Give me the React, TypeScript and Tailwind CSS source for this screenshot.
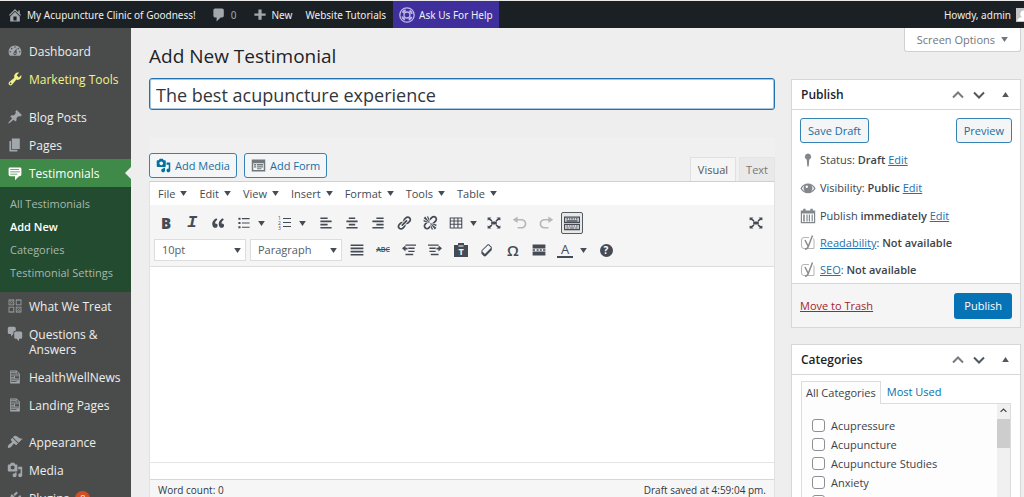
import type { ReactNode } from "react";

const P = {
  home: "M16 8.5l1.53 1.53-1.06 1.06L10 4.6l-6.47 6.49-1.06-1.06L10 2.5l4 4v-2h2v4zm-6-2.46l6 5.99V18H4v-5.97zM12 17v-5H8v5h4z",
  comment: "M5 2h9c1.1 0 2 .9 2 2v7c0 1.1-.9 2-2 2h-2l-5 5v-5H5c-1.1 0-2-.9-2-2V4c0-1.1.9-2 2-2z",
  plus: "M17 8v3h-5v5H8v-5H3V8h5V3h4v5h5z",
  dashboard:
    "M3.76 16h12.48c1.1-1.37 1.76-3.11 1.76-5 0-4.42-3.58-8-8-8s-8 3.58-8 8c0 1.89.66 3.63 1.76 5zM10 4c.55 0 1 .45 1 1s-.45 1-1 1-1-.45-1-1 .45-1 1-1zM6 6c.55 0 1 .45 1 1s-.45 1-1 1-1-.45-1-1 .45-1 1-1zm8 0c.55 0 1 .45 1 1s-.45 1-1 1-1-.45-1-1 .45-1 1-1zm-5.37 5.55L12 7v6c0 1.1-.9 2-2 2s-2-.9-2-2c0-.57.24-1.08.63-1.45zM4 10c.55 0 1 .45 1 1s-.45 1-1 1-1-.45-1-1 .45-1 1-1zm12 0c.55 0 1 .45 1 1s-.45 1-1 1-1-.45-1-1 .45-1 1-1zm-5 3c0-.55-.45-1-1-1s-1 .45-1 1 .45 1 1 1 1-.45 1-1z",
  tools:
    "M16.68 9.77c-1.34 1.34-3.3 1.67-4.95.99l-5.41 6.52c-.99.99-2.59.99-3.58 0s-.99-2.59 0-3.57l6.52-5.42c-.68-1.65-.35-3.61.99-4.95 1.28-1.28 3.12-1.62 4.72-1.06l-2.89 2.89 2.82 2.82 2.86-2.87c.53 1.58.18 3.39-1.08 4.65zM3.81 16.21c.4.39 1.04.39 1.43 0 .4-.4.4-1.04 0-1.43-.39-.4-1.03-.4-1.43 0-.39.39-.39 1.03 0 1.43z",
  pin: "M10.44 3.02l1.82-1.82 6.36 6.35-1.83 1.82c-1.05-.68-2.48-.57-3.41.36l-.75.75c-.92.93-1.04 2.35-.35 3.41l-1.83 1.82-2.41-2.41-2.8 2.79c-.42.42-3.38 2.71-3.8 2.29s1.86-3.39 2.28-3.81l2.79-2.79L4.1 9.36l1.83-1.82c1.05.69 2.48.57 3.4-.36l.75-.75c.93-.92 1.05-2.35.36-3.41z",
  page: "M6 15V2h10v13H6zm-1 1h8v2H3V5h2v11z",
  testimonial:
    "M4 3h12c.55 0 1.02.2 1.41.59S18 4.45 18 5v7c0 .55-.2 1.02-.59 1.41S16.55 14 16 14h-1l-5 5v-5H4c-.55 0-1.02-.2-1.41-.59S2 12.55 2 12V5c0-.55.2-1.02.59-1.41S3.45 3 4 3zm11 2H4v1h11V5zm1 3H4v1h12V8zm-3 3H4v1h9v-1z",
  chat: "M11 6h-.82C9.07 6 8 7.2 8 8.16V10l-3 3v-3H3c-1.1 0-2-.9-2-2V3c0-1.1.9-2 2-2h6c1.1 0 2 .9 2 2v3zm0 1h6c1.1 0 2 .9 2 2v5c0 1.1-.9 2-2 2h-2v3l-3-3h-1c-1.1 0-2-.9-2-2V9c0-1.1.9-2 2-2z",
  doc: "M12 2l4 4v12H4V2h8zM5 3v1h6V3H5zm7 3h3l-3-3v3zM5 5v1h6V5H5zm10 3V7H5v1h10zM5 9v1h4V9H5zm10 3V9h-5v3h5zM5 11v1h4v-1H5zm10 3v-1H5v1h10zm-3 2v-1H5v1h7z",
  appearance:
    "M14.48 11.06L7.41 3.99l1.5-1.5c.5-.56 2.3-.47 3.51.32 1.21.8 1.43 1.28 2.91 2.1 1.18.64 2.45 1.26 4.45.85zm-.71.71L6.7 4.7 4.93 6.47c-.39.39-.39 1.02 0 1.41l1.06 1.06c.39.39.39 1.03 0 1.42-.6.6-1.43 1.11-2.21 1.69-.35.26-.7.53-1.01.84C1.43 14.23.4 16.08 1.4 17.07c.99 1 2.84-.03 4.18-1.36.31-.31.58-.66.85-1.02.57-.78 1.08-1.61 1.69-2.21.39-.39 1.02-.39 1.41 0l1.06 1.06c.39.39 1.02.39 1.41 0z",
  media:
    "M13 11V4c0-.55-.45-1-1-1h-1.67L9 1H5L3.67 3H2c-.55 0-1 .45-1 1v7c0 .55.45 1 1 1h10c.55 0 1-.45 1-1zM7 4.5c1.38 0 2.5 1.12 2.5 2.5S8.38 9.5 7 9.5 4.5 8.38 4.5 7 5.62 4.5 7 4.5zM14 6h5v10.5c0 1.38-1.12 2.5-2.5 2.5S14 17.88 14 16.5s1.12-2.5 2.5-2.5c.17 0 .34.02.5.05V9h-3V6zm-4 8.05V13h2v3.5c0 1.38-1.12 2.5-2.5 2.5S7 17.88 7 16.5 8.12 14 9.5 14c.17 0 .34.02.5.05z",
  plugins:
    "M13.11 4.36L9.87 7.6 8 5.73l3.24-3.24c.35-.34 1.05-.2 1.56.32.52.51.66 1.21.31 1.55zm-8 1.77l.91-1.12 9.01 9.01-1.19.84c-.71.71-2.63 1.16-3.82 1.16H6.14L4.9 17.26c-.59.59-1.54.59-2.12 0-.59-.58-.59-1.53 0-2.12l1.24-1.24v-3.88c0-1.13.4-3.19 1.09-3.89zm7.26 3.97l3.24-3.24c.34-.35 1.04-.21 1.55.31.52.51.66 1.21.31 1.55l-3.24 3.25z",
  treat:
    "M2 2h7v7H2zM3 3v5h5V3zM11 2h7v7h-7zM12 3v5h5V3zM2 11h7v7H2zM3 12v5h5v-5zM11 11h7v7h-7zM12 12v5h5v-5zM4 4h1v1h1V4h1v1H6v1h1v1H6V6H5v1H4V6h1V5H4zM13 13h1v1h1v-1h1v1h-1v1h1v1h-1v-1h-1v1h-1v-1h1v-1h-1z",
  quote:
    "M9.49 13.22c0-.74-.2-1.38-.61-1.9-.62-.78-1.83-.88-2.53-.72-.29-1.65 1.11-3.75 2.92-4.65L7.88 4c-2.73 1.3-5.42 4.28-4.96 8.05C3.21 14.43 4.59 16 6.54 16c.85 0 1.56-.25 2.12-.75s.83-1.18.83-2.03zm8.05 0c0-.74-.2-1.38-.61-1.9-.63-.78-1.83-.88-2.53-.72-.29-1.65 1.11-3.75 2.92-4.65L15.93 4c-2.73 1.3-5.41 4.28-4.95 8.05.29 2.38 1.66 3.95 3.61 3.95.85 0 1.56-.25 2.12-.75s.83-1.18.83-2.03z",
  left: "M12 5V3H3v2h9zm5 4V7H3v2h14zm-5 4v-2H3v2h9zm5 4v-2H3v2h14z",
  center: "M14 5V3H6v2h8zm3 4V7H3v2h14zm-3 4v-2H6v2h8zm3 4v-2H3v2h14z",
  right: "M17 5V3H8v2h9zm0 4V7H3v2h14zm0 4v-2H8v2h9zm0 4v-2H3v2h14z",
  justify: "M2 3h16v2H2V3zm0 4h16v2H2V7zm0 4h16v2H2v-2zm0 4h16v2H2v-2z",
  link: "M17.74 2.76c1.68 1.69 1.68 4.41 0 6.1l-1.53 1.52c-1.12 1.12-2.7 1.47-4.14 1.09l2.62-2.61.76-.77.76-.76c.84-.84.84-2.2 0-3.04-.84-.85-2.2-.85-3.04 0l-.77.76-3.38 3.38c-.37-1.44-.02-3.02 1.1-4.14l1.52-1.53c1.69-1.68 4.42-1.68 6.1 0zM8.59 13.43l5.34-5.34c.42-.42.42-1.1 0-1.52-.44-.43-1.13-.39-1.53 0l-5.33 5.34c-.42.42-.42 1.1 0 1.52.44.43 1.13.39 1.52 0zm-.76 2.29l4.14-4.15c.38 1.44.03 3.02-1.09 4.14l-1.52 1.53c-1.69 1.68-4.41 1.68-6.1 0-1.68-1.68-1.68-4.42 0-6.1l1.53-1.52c1.12-1.12 2.7-1.47 4.14-1.1l-4.14 4.15c-.85.84-.85 2.2 0 3.05.84.84 2.2.84 3.04 0z",
  unlink:
    "M17.74 2.26c1.68 1.69 1.68 4.41 0 6.1l-1.53 1.52c-.32.33-.69.58-1.08.77L13 10l1.69-1.64.76-.77.76-.76c.84-.84.84-2.2 0-3.04-.84-.85-2.2-.85-3.04 0l-.77.76-.76.76L10 7l-.65-2.14c.19-.38.44-.75.77-1.07l1.52-1.53c1.69-1.68 4.42-1.68 6.1 0zM2 4l8 6-6-8zm4-2l4 8-2-8H6zM2 6l8 4-8-2V6zm7.36 7.69L10 13l.74 2.35-1.38 1.39c-1.69 1.68-4.41 1.68-6.1 0-1.68-1.68-1.68-4.42 0-6.1l1.39-1.38L7 10l-.69.64-1.52 1.53c-.85.84-.85 2.2 0 3.04.84.85 2.2.85 3.04 0zM18 16l-8-6 6 8zm-4 2l-4-8 2 8h2zm4-4l-8-4 8 2v2z",
  full: "M7 3H2v4l1.5-1.200L7 8l1-1-2.800-2.800zM13 3h5v4l-1.500-1.200L13 8l-1-1 2.800-2.800zM7 17H2v-4l1.500 1.200L7 12l1 1-2.800 2.800zM13 17h5v-4l-1.500 1.200L13 12l-1 1 2.800 2.800zM6.500 8h7v4h-7z",
  undo: "M12 5H7V2L1 6l6 4V7h5c2.200 0 4 1.800 4 4s-1.800 4-4 4H7v2h5c3.300 0 6-2.700 6-6s-2.700-6-6-6z",
  redo: "M8 5h5V2l6 4-6 4V7H8c-2.200 0-4 1.800-4 4s1.800 4 4 4h5v2H8c-3.300 0-6-2.700-6-6s2.700-6 6-6z",
  table: "M1 2h18v16H1zM2.500 3.500v3h4v-3zM8 3.500v3h4v-3zM13.500 3.500v3h4v-3zM2.500 8v3h4V8zM8 8v3h4V8zM13.500 8v3h4V8zM2.500 12.500v4h4v-4zM8 12.500v4h4v-4zM13.500 12.500v4h4v-4z",
  sink: "M0 2h20v8H0zM1.500 3.500v5h17v-5zM3 4h2v1.500H3zM6 4h2v1.500H6zM9 4h2v1.500H9zM12 4h2v1.500h-2zM15 4h2v1.500h-2zM3 6.500h14V8H3zM0 11h20v8H0zM1.500 12.500v5h17v-5zM3 13h2v1.500H3zM6 13h2v1.500H6zM9 13h2v1.500H9zM12 13h2v1.500h-2zM15 13h2v1.500h-2zM3 15.500h3V17H3zM7 15.500h6V17H7zM14 15.500h3V17h-3z",
  outdent: "M5 2h15v2H5zM9 6.500h9v2H9zM9 11h9v2H9zM5 15.500h11v2H5zM8 9.200H5V12L0 7.500 5 3.500v3.300h3z",
  indent: "M0 2h15v2H0zM2 6.500h9v2H2zM2 11h9v2H2zM4 15.500h11v2H4zM12 6.800h3V3.500l5 4-5 4.500V9.200h-3z",
  eraser:
    "M14.29 4.59l1.1 1.11c.41.4.61.94.61 1.47v2.12c0 .53-.2 1.07-.61 1.47l-6.63 6.63c-.4.41-.94.61-1.47.61s-1.07-.2-1.47-.61l-1.11-1.1-1.1-1.11c-.41-.4-.61-.94-.61-1.47v-2.12c0-.54.2-1.07.61-1.48l6.63-6.62c.4-.41.94-.61 1.47-.61s1.06.2 1.47.61zm-6.21 9.7l6.42-6.42c.39-.39.39-1.03 0-1.43L12.36 4.3c-.19-.19-.45-.29-.72-.29s-.52.1-.71.29l-6.42 6.42c-.39.4-.39 1.04 0 1.43l2.14 2.14c.38.38 1.04.38 1.43 0z",
  more: "M2 3h16v5H2zM2 9h3v2H2zM7 9h2.500v2H7zM11 9h2.500v2H11zM15 9h3v2h-3zM2 12h16v5H2z",
  ul: "M2 2.500h3v3H2zM7 3h11v1.500H7zM2 8.500h3v3H2zM7 9.200h11v1.500H7zM2 14.500h3v3H2zM7 15.200h11v1.500H7z",
  form: "M1 2h18v16H1zM3 7v9h14V7zM4 8h3v2H4zM8 8h8v2H8zM4 11h3v1.500H4zM8 11h8v1.500H8zM8 13.500h6V15H8z",
  status: "M10 2a4 4 0 0 1 1.500 7.700L11 17l-1 2-1-2-.500-7.300A4 4 0 0 1 10 2z",
  eye: "M.5 10.500C2.500 6.700 6 4.500 10 4.500s7.500 2.200 9.500 6c-2 3.800-5.500 6-9.500 6s-7.500-2.200-9.500-6zM2.400 10.500c1 1.800 2.300 3.100 4 3.900A5 5 0 0 1 6 6.700c-1.500.9-2.700 2.100-3.600 3.800zM17.600 10.500c-.9-1.700-2.100-2.900-3.600-3.800a5 5 0 0 1-.4 7.700c1.700-.8 3-2.100 4-3.900zM8.500 7a1.500 1.500 0 1 0 0 3 1.500 1.500 0 0 0 0-3z",
  calendar: "M4 1h3v2h6V1h3v2h3v16H1V3h3zM2.500 7v10.500h15V7zM4 8h2v9H4zM8 8h1.500v9H8zM11 8h1.500v9H11zM14.500 8h1.500v9h-1.500z",
};

function Ico({ name, className = "size-4" }: { name: keyof typeof P; className?: string }) {
  return (
    <svg viewBox="0 0 20 20" className={`shrink-0 fill-current ${className}`} fillRule="evenodd" aria-hidden="true">
      <path d={P[name]} />
    </svg>
  );
}

function Caret({ up = false, className = "" }: { up?: boolean; className?: string }) {
  return (
    <svg viewBox="0 0 8 6" className={`h-[5px] w-[7px] shrink-0 fill-current ${className}`} aria-hidden="true">
      <path d={up ? "M4 0l4 6H0z" : "M0 0h8L4 6z"} />
    </svg>
  );
}

function Chevron({ up = false, className = "h-2 w-3" }: { up?: boolean; className?: string }) {
  return (
    <svg viewBox="0 0 12 8" className={`fill-none stroke-current stroke-2 ${className}`} aria-hidden="true">
      <path d={up ? "M1 6.500l5-5 5 5" : "M1 1.500l5 5 5-5"} />
    </svg>
  );
}

function NavItem({ icon, label, tone = "text-[#eee]" }: { icon: keyof typeof P; label: ReactNode; tone?: string }) {
  return (
    <a href="#" className={`flex gap-1.5 px-[7px] pt-1.5 pb-1.5 text-[12px] ${tone}`}>
      <Ico name={icon} className={tone === "text-[#eee]" ? "size-4 text-[#a2a7ab]" : "size-4"} />
      <span className="pt-px leading-[15px] whitespace-nowrap">{label}</span>
    </a>
  );
}

function Tool({ label, children }: { label: string; children: ReactNode }) {
  return (
    <button type="button" aria-label={label} className="flex h-[22px] w-[26px] shrink-0 items-center justify-center">
      {children}
    </button>
  );
}

function SplitTool({ label, width = "w-[41px]", children }: { label: string; width?: string; children: ReactNode }) {
  return (
    <button type="button" aria-label={label} className={`flex h-[22px] shrink-0 items-center gap-[7px] pl-[6px] ${width}`}>
      {children}
      <Caret />
    </button>
  );
}

function BoxHeader({ title }: { title: string }) {
  return (
    <header className="flex h-[30px] items-center border-b border-[#d5d7d9] px-[9px] text-[#50575e]">
      <h2 className="grow text-[12px] leading-4 font-semibold text-[#1d2327]">{title}</h2>
      <div className="flex items-center gap-[9px]">
        <button type="button" aria-label={`Move ${title} up`}>
          <Chevron up className="h-2 w-3 text-[#787c82]" />
        </button>
        <button type="button" aria-label={`Move ${title} down`}>
          <Chevron />
        </button>
        <button type="button" aria-label={`Toggle ${title}`} className="ml-2 pr-0.5">
          <Caret up />
        </button>
      </div>
    </header>
  );
}

const outlineButton =
  "flex h-[25px] items-center rounded-[3px] border border-[#3582b5] bg-[#f3f5f6] text-[11px] leading-4 text-[#1a6e9f]";

function Seo() {
  return (
    <svg viewBox="0 0 16 16" className="size-4 shrink-0 fill-none stroke-[#8c8c8c]" aria-hidden="true">
      <path d="M9 2.500H4Q1.500 2.500 1.500 5v6Q1.500 13.500 4 13.500h10V5Q14 4 13.500 3.500" stroke="#b4b4b4" />
      <path d="M5 5l3 6M12.500.5L8.500 11Q7.500 14 5 14.200" strokeWidth="1.500" />
    </svg>
  );
}

function Sidebar() {
  return (
    <nav className="w-[131px] shrink-0 bg-[#4a4c4b] pt-[9px]">
      <NavItem icon="dashboard" label="Dashboard" />
      <NavItem icon="tools" label="Marketing Tools" tone="text-[#f2f285]" />
      <div className="h-2.5" />
      <NavItem icon="pin" label="Blog Posts" />
      <NavItem icon="page" label="Pages" />
      <div className="relative bg-[#3f8a48]">
        <NavItem icon="testimonial" label="Testimonials" tone="text-white" />
        <svg viewBox="0 0 6 12" className="absolute top-2 right-0 h-3 w-1.5 fill-[#eee]" aria-hidden="true">
          <path d="M6 0v12L0 6z" />
        </svg>
      </div>
      <ul className="bg-[#224b2f] pt-[5px] pb-2 text-[11px] leading-[23px] text-[#a9b8ae]">
        {["All Testimonials", "Add New", "Categories", "Testimonial Settings"].map((t) => (
          <li key={t}>
            <a href="#" className={t === "Add New" ? "block pl-2.5 font-semibold whitespace-nowrap text-white" : "block pl-2.5 whitespace-nowrap"}>
              {t}
            </a>
          </li>
        ))}
      </ul>
      <NavItem icon="treat" label="What We Treat" />
      <NavItem
        icon="chat"
        label={
          <>
            Questions &amp;
            <br />
            Answers
          </>
        }
      />
      <NavItem icon="doc" label="HealthWellNews" />
      <NavItem icon="doc" label="Landing Pages" />
      <div className="h-[9px]" />
      <NavItem icon="appearance" label="Appearance" />
      <NavItem icon="media" label="Media" />
      <NavItem
        icon="plugins"
        label={
          <span className="flex gap-1.5">
            Plugins
            <span className="size-[15px] rounded-full bg-[#d54e21] text-center text-[9px] leading-[15px] text-white">8</span>
          </span>
        }
      />
    </nav>
  );
}

function Editor() {
  return (
    <section className="mt-[27px] bg-[#f0f0f0]">
      <div className="flex items-end justify-between">
        <div className="flex gap-[7px] pt-4 pb-[3px]">
          <button type="button" className={`${outlineButton} gap-1 px-1.5`}>
            <Ico name="media" className="size-[15px] text-[#0071a1]" />
            Add Media
          </button>
          <button type="button" className={`${outlineButton} gap-1 px-1.5`}>
            <Ico name="form" className="size-[15px] text-[#72777c]" />
            Add Form
          </button>
        </div>
        <div className="flex gap-[3px] text-[11px] leading-[22px] text-[#555]">
          <button type="button" className="h-6 border border-b-0 border-[#e0e0e0] bg-[#f5f5f5] px-[7px]">
            Visual
          </button>
          <button type="button" className="h-6 border border-b-0 border-[#e4e4e4] bg-[#e9e9e9] px-1.5 text-[#777]">
            Text
          </button>
        </div>
      </div>
      <div className="border border-t-[#d0d0d0] border-[#e2e2e2] bg-white">
        <div className="flex h-[23px] items-center gap-3 pl-2 text-[11px] leading-4 text-[#444b54]">
          {["File", "Edit", "View", "Insert", "Format", "Tools", "Table"].map((m) => (
            <button key={m} type="button" className="flex items-center gap-[5px]">
              {m}
              <Caret />
            </button>
          ))}
        </div>
        <div className="border-b border-[#ddd] bg-[#f5f5f5] pt-[7px] pb-[5px] text-[#444b54]">
          <div className="flex h-[22px] items-center pr-[5px] pl-[3px]">
            <Tool label="Bold">
              <span className="text-[15px] leading-4 font-extrabold">B</span>
            </Tool>
            <Tool label="Italic">
              <span className="font-['Liberation_Mono',monospace] text-[17px] leading-4 font-bold italic">I</span>
            </Tool>
            <Tool label="Blockquote">
              <Ico name="quote" />
            </Tool>
            <SplitTool label="Bulleted list">
              <Ico name="ul" className="size-3.5" />
            </SplitTool>
            <SplitTool label="Numbered list">
              <svg viewBox="0 0 14 14" className="size-3.5 fill-current" aria-hidden="true">
                <path d="M5 2h8v1H5zM5 6h8v1H5zM5 10h8v1H5z" />
                <text x="0" y="4" fontSize="5">1</text>
                <text x="0" y="9" fontSize="5">2</text>
                <text x="0" y="14" fontSize="5">3</text>
              </svg>
            </SplitTool>
            <Tool label="Align left">
              <Ico name="left" />
            </Tool>
            <Tool label="Align center">
              <Ico name="center" />
            </Tool>
            <Tool label="Align right">
              <Ico name="right" />
            </Tool>
            <Tool label="Insert link">
              <Ico name="link" />
            </Tool>
            <Tool label="Remove link">
              <Ico name="unlink" />
            </Tool>
            <SplitTool label="Table" width="w-[38px]">
              <Ico name="table" className="size-3.5" />
            </SplitTool>
            <Tool label="Fullscreen">
              <Ico name="full" />
            </Tool>
            <Tool label="Undo">
              <Ico name="undo" className="size-4 text-[#b4b7bb]" />
            </Tool>
            <Tool label="Redo">
              <Ico name="redo" className="size-4 text-[#b4b7bb]" />
            </Tool>
            <button
              type="button"
              aria-label="Toolbar toggle"
              className="ml-0.5 flex size-[22px] items-center justify-center rounded-[2px] border border-[#555d66] bg-[#e8e8e8]"
            >
              <Ico name="sink" />
            </button>
            <div className="grow" />
            <Tool label="Distraction free">
              <Ico name="full" />
            </Tool>
          </div>
          <div className="mt-[5px] flex h-[22px] items-center pl-1">
            <div className="mr-0.5 flex gap-1">
              {["10pt", "Paragraph"].map((o) => (
                <div key={o} className="relative flex items-center">
                  <select
                    aria-label={o === "10pt" ? "Font size" : "Block format"}
                    className="h-[22px] w-[92px] appearance-none border border-[#ddd] bg-white pl-[7px] text-[11px] leading-4 text-[#555d66]"
                  >
                    <option>{o}</option>
                  </select>
                  <Caret className="pointer-events-none absolute right-[5px]" />
                </div>
              ))}
            </div>
            <Tool label="Justify">
              <Ico name="justify" />
            </Tool>
            <Tool label="Strikethrough">
              <span className="text-[7px] leading-4 font-semibold line-through">ABC</span>
            </Tool>
            <Tool label="Decrease indent">
              <Ico name="outdent" className="size-3.5" />
            </Tool>
            <Tool label="Increase indent">
              <Ico name="indent" className="size-3.5" />
            </Tool>
            <Tool label="Paste as text">
              <svg viewBox="0 0 14 14" className="size-3.5" aria-hidden="true">
                <path d="M0 2h4V0h6v2h4v12H0z" className="fill-current" />
                <path d="M4.500 3h5" stroke="#f5f5f5" />
                <text x="7" y="12" fontSize="9" fontWeight="bold" textAnchor="middle" fill="#f5f5f5">T</text>
              </svg>
            </Tool>
            <Tool label="Clear formatting">
              <Ico name="eraser" />
            </Tool>
            <Tool label="Special character">
              <span className="text-[15px] leading-4 font-semibold">Ω</span>
            </Tool>
            <Tool label="Read more">
              <Ico name="more" />
            </Tool>
            <SplitTool label="Text color">
              <span className="-ml-px w-4 border-b-2 border-current text-center text-[13px] leading-[13px] font-medium">A</span>
            </SplitTool>
            <Tool label="Help">
              <span className="size-[13px] rounded-full bg-[#444b54] text-center text-[10px] leading-[13px] font-bold text-white">?</span>
            </Tool>
          </div>
        </div>
        <div role="textbox" aria-label="Content" contentEditable suppressContentEditableWarning className="h-[195px] outline-none" />
        <div className="h-[17px] border-t border-[#e5e5e5]" />
        <div className="flex h-5 items-center justify-between border-t border-[#d5d7d9] bg-[#f6f6f6] px-2 text-[10px] leading-4 text-[#32373c]">
          <span>Word count: 0</span>
          <span>Draft saved at 4:59:04 pm.</span>
        </div>
      </div>
    </section>
  );
}

function PublishBox() {
  const link = "text-[#2271b1] underline";
  return (
    <section className="border border-[#d5d7d9] bg-white">
      <BoxHeader title="Publish" />
      <div className="px-2 pt-2 text-[11px] leading-4 text-[#444]">
        <div className="flex justify-between">
          <button type="button" className={`${outlineButton} px-[7px]`}>
            Save Draft
          </button>
          <button type="button" className={`${outlineButton} px-[7px]`}>
            Preview
          </button>
        </div>
        <div className="mt-[3px] text-[#3c434a]">
          <p className="flex h-7 items-center gap-1">
            <Ico name="status" className="size-4 text-[#82878c]" />
            <span>
              Status: <b className="font-semibold">Draft</b> <a href="#" className={link}>Edit</a>
            </span>
          </p>
          <p className="flex h-7 items-center gap-1">
            <Ico name="eye" className="size-4 text-[#82878c]" />
            <span>
              Visibility: <b className="font-semibold">Public</b> <a href="#" className={link}>Edit</a>
            </span>
          </p>
          <p className="flex h-7 items-center gap-1">
            <Ico name="calendar" className="size-4 text-[#82878c]" />
            <span>
              Publish <b className="font-semibold">immediately</b> <a href="#" className={link}>Edit</a>
            </span>
          </p>
          <p className="flex h-[26px] items-center gap-1">
            <Seo />
            <span>
              <a href="#" className={link}>Readability</a>: <b className="font-semibold">Not available</b>
            </span>
          </p>
          <p className="flex h-[27px] items-center gap-1">
            <Seo />
            <span>
              <a href="#" className={link}>SEO</a>: <b className="font-semibold">Not available</b>
            </span>
          </p>
        </div>
      </div>
      <footer className="flex h-11 items-center justify-between border-t border-[#d5d7d9] bg-[#f5f5f5] px-2 text-[11px] leading-4">
        <a href="#" className="text-[#a8232a] underline">
          Move to Trash
        </a>
        <button type="button" className="h-[26px] rounded-[3px] bg-[#0673b6] px-2.5 text-white">
          Publish
        </button>
      </footer>
    </section>
  );
}

function CategoriesBox() {
  return (
    <section className="border border-[#d5d7d9] bg-white">
      <BoxHeader title="Categories" />
      <div className="px-[9px] pt-1.5 text-[11px] leading-4 text-[#3c434a]">
        <div className="flex">
          <button type="button" className="z-10 -mb-px border border-b-0 border-[#dcdcde] bg-[#fdfdfd] px-1 py-[3px]">
            All Categories
          </button>
          <button type="button" className="px-1.5 text-[#0073aa]">
            Most Used
          </button>
        </div>
        <div className="flex h-[170px] justify-between border border-[#dcdcde] bg-[#fdfdfd]">
          <div className="px-2.5 pt-3">
            {["Acupressure", "Acupuncture", "Acupuncture Studies", "Anxiety", "Back Pain"].map((c) => (
              <label key={c} className="flex h-[19px] items-center gap-1.5">
                <input type="checkbox" className="size-[13px] appearance-none rounded-[3px] border border-[#8c8f94] bg-white" />
                {c}
              </label>
            ))}
          </div>
          <div className="flex w-[13px] flex-col items-center bg-[#f0f0f0]">
            <Chevron up className="mt-1 h-[5px] w-[7px]" />
            <div className="mt-1.5 h-[29px] w-[13px] bg-[#cdcdcd]" />
          </div>
        </div>
      </div>
    </section>
  );
}

export default function App() {
  return (
    <div className="flex h-screen flex-col overflow-hidden bg-[#eee] font-['Open_Sans',sans-serif] text-[#3c434a]">
      <div className="flex h-7 shrink-0 items-center border-t border-[#e8e8e8] bg-[#1b2024] pl-[7px] font-['Noto_Sans',sans-serif] text-[10px] leading-4 whitespace-nowrap text-[#eee]">
        <a href="#" className="flex items-center gap-1">
          <Ico name="home" className="size-4 text-[#a2a7ab]" />
          My Acupuncture Clinic of Goodness!
        </a>
        <a href="#" className="ml-[15px] flex items-center gap-1 text-[#a2a7ab]">
          <Ico name="comment" />0
        </a>
        <a href="#" className="ml-[15px] flex items-center gap-1">
          <Ico name="plus" className="size-4 text-[#a2a7ab]" />
          New
        </a>
        <a href="#" className="ml-[13px]">Website Tutorials</a>
        <a href="#" className="ml-[7px] flex h-full items-center gap-1 bg-[#3f2f9d] px-1.5">
          <svg viewBox="0 0 16 16" className="size-4 fill-none stroke-[#c0b8e8]" aria-hidden="true">
            <circle cx="8" cy="8" r="7.200" strokeWidth="1.300" />
            <circle cx="8" cy="8" r="3" strokeWidth="1.300" />
            <circle cx="8" cy="8" r="5" strokeWidth="2" strokeDasharray="3.900 3.950" strokeDashoffset="-2" />
          </svg>
          Ask Us For Help
        </a>
        <div className="grow" />
        <a href="#" className="flex items-center gap-[5px]">
          Howdy, admin
          <svg viewBox="0 0 8 14" className="h-3.5 w-2" aria-hidden="true">
            <path d="M0 0h8v14H0z" fill="#c3c4c7" />
            <path d="M8 2.500A3.500 3.500 0 0 0 6 9Q2 9.500 1 13h7z" fill="#fff" />
          </svg>
        </a>
      </div>
      <div className="flex min-h-0 grow">
        <Sidebar />
        <main className="min-w-0 grow pr-[3px] pl-[18px]">
          <div className="flex h-[50px] items-start justify-between">
            <h1 className="pt-4 text-[19px] leading-6 text-[#1d2327]">Add New Testimonial</h1>
            <button
              type="button"
              className="flex h-6 items-center gap-1.5 rounded-b-[3px] border border-t-0 border-[#d0d1d3] bg-white px-3 text-[11px] leading-4 text-[#72777c]"
            >
              Screen Options
              <Caret />
            </button>
          </div>
          <div className="flex gap-4">
            <div className="min-w-0 grow">
              <input
                aria-label="Title"
                defaultValue="The best acupuncture experience"
                className="block h-8 w-full rounded-[3px] border border-[#2271b1] bg-white px-1.5 pt-px text-[18px] leading-6 text-[#32373c] ring-1 ring-[#2271b1]/40 outline-none ring-inset"
              />
              <Editor />
            </div>
            <aside className="flex w-[230px] shrink-0 flex-col gap-4 pt-px">
              <PublishBox />
              <CategoriesBox />
            </aside>
          </div>
        </main>
      </div>
    </div>
  );
}
